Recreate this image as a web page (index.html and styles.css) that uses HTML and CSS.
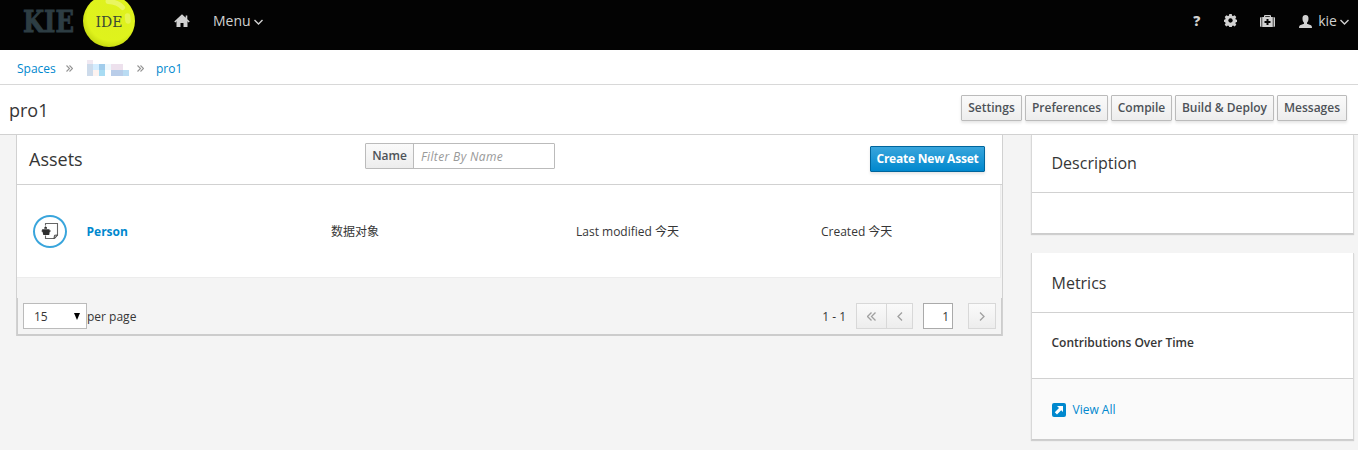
FILE: index.html
```html
<!DOCTYPE html>
<html lang="en">
<head>
<meta charset="utf-8">
<title>KIE IDE</title>
<link rel="stylesheet" href="styles.css">
</head>
<body>
<header class="navbar">
  <svg class="logo" width="140" height="50" viewBox="0 0 140 50">
    <defs><radialGradient id="ball" cx="55%" cy="42%" r="58%"><stop offset="0" stop-color="#def01f"/><stop offset=".8" stop-color="#dff31c"/><stop offset="1" stop-color="#c9dc12"/></radialGradient></defs>
    <text class="logo-kie" x="23" y="31.500" textLength="51" lengthAdjust="spacingAndGlyphs">KIE</text>
    <circle cx="109" cy="21" r="26" fill="url(#ball)"/>
    <path d="M108 1.500 Q118 2 122.500 7.500" stroke="#e9f660" stroke-width="5" stroke-linecap="round" fill="none"/>
    <path d="M127.500 16 L128 21" stroke="#e7f552" stroke-width="5.500" stroke-linecap="round"/>
    <text class="logo-ide" x="95.500" y="26.700" textLength="27" lengthAdjust="spacingAndGlyphs">IDE</text>
  </svg>
  <svg class="home" width="16" height="14" viewBox="0 0 16 14"><path d="M8 1.500L2.500 6.500V13h4V9h3v4h4V6.500z"/><path d="M.8 8L8 1.300 15.200 8M12.500 1.500v4" fill="none" stroke="#d1d1d1" stroke-width="1.600"/></svg>
  <span class="nav-text menu">Menu</span>
  <svg class="caret" width="9" height="6" viewBox="0 0 9 6"><path d="M.5 1l4 4 4-4"/></svg>
  <div class="nav-right">
    <span class="help">?</span>
    <svg class="gear" width="13" height="13" viewBox="0 0 13 13"><path fill-rule="evenodd" d="M5.300 0h2.400l.4 1.700 1 .4 1.500-.9 1.700 1.700-.9 1.500.4 1 1.700.4v2l-1.700.4-.4 1 .9 1.500-1.700 1.700-1.500-.9-1 .4-.4 1.600H5.300l-.4-1.600-1-.4-1.500.9L.7 10.700l.9-1.500-.4-1L0 7.800v-2l1.200-.4.4-1-.9-1.500 1.700-1.700 1.500.9 1-.4zM6.500 4.300a2.200 2.200 0 1 0 .01 0z"/></svg>
    <svg class="medkit" width="15" height="12" viewBox="0 0 15 12"><path fill-rule="evenodd" d="M0 3q0-1 1.500-1v10Q0 12 0 11zM2.200 2H4V1q0-1 1-1h5q1 0 1 1v1h1.800v10H2.200zM5.200 1.200V2h4.600v-.8zM6.500 4v2h-2v2h2v2h2V8h2V6h-2V4zM13.500 2Q15 2 15 3v8q0 1-1.500 1z"/></svg>
    <svg class="user" width="13" height="13" viewBox="0 0 13 13"><path d="M6.500 0C8.700 0 9.700 1.500 9.500 4 9.400 5.800 8.800 7 8 7.800v1l4 1.500q1 .5 1 2.700H0q0-2.200 1-2.700l4-1.500v-1C4.200 7 3.600 5.800 3.500 4 3.300 1.500 4.300 0 6.500 0z"/></svg>
    <span class="nav-text">kie</span>
    <svg class="caret" width="9" height="6" viewBox="0 0 9 6"><path d="M.5 1l4 4 4-4"/></svg>
  </div>
</header>
<nav class="breadcrumb">
  <a class="crumb-spaces">Spaces</a>
  <svg class="sep" width="7" height="7" viewBox="0 0 7 7"><path d="M.5.500l3 3-3 3M3.500.500l3 3-3 3"/></svg>
  <svg class="mosaic" width="42" height="16" viewBox="0 0 42 16" shape-rendering="crispEdges">
    <path fill="#f0e8f1" d="M0 0h6v4H0z"/><path fill="#cddbeb" d="M0 4h6v12H0z"/><path fill="#d4edff" d="M6 4h6v6H6z"/><path fill="#fdf3f0" d="M6 10h6v6H6z"/><path fill="#a1cceb" d="M12 4h6v6h-6z"/><path fill="#a8dcf3" d="M12 10h6v6h-6z"/><path fill="#eef8fd" d="M18 4h6v6h-6z"/><path fill="#ede1ed" d="M24 4h12v6H24z"/><path fill="#b9cde9" d="M24 10h12v6H24z"/><path fill="#badcf3" d="M36 10h6v6h-6z"/>
  </svg>
  <svg class="sep" width="7" height="7" viewBox="0 0 7 7"><path d="M.5.500l3 3-3 3M3.500.500l3 3-3 3"/></svg>
  <a class="crumb-project">pro1</a>
</nav>
<section class="titlebar">
  <h1>pro1</h1>
  <div class="actions">
    <button class="btn settings">Settings</button>
    <button class="btn preferences">Preferences</button>
    <button class="btn compile">Compile</button>
    <button class="btn deploy">Build &amp; Deploy</button>
    <button class="btn messages">Messages</button>
  </div>
</section>
<main class="content">
  <section class="assets">
    <div class="assets-head">
      <h2>Assets</h2>
      <div class="filter"><span class="filter-label">Name</span><span class="filter-input">Filter By Name</span></div>
      <button class="btn primary">Create New Asset</button>
    </div>
    <div class="asset-row">
      <span class="asset-icon">
        <svg width="18" height="18" viewBox="0 0 18 18"><path d="M4.500 3.500V1.500h12V13l-3 3.500h-9V13.500" fill="none" stroke="#666" stroke-width="1.100"/><path d="M13 16.500l.5-3.200 3-.3z" fill="#fff" stroke="#444"/><path d="M3.300 5.500L4.500 4.200 6 5.500v1.300H3.300zM1 7.300h7.600l-.3.900h1.200v1.600h-.8L8.200 13H2.300L1.500 9.800H.7V8.200h.6z" fill="#2f2f2f"/></svg>
      </span>
      <a class="asset-name">Person</a>
      <span>数据对象</span>
      <span>Last modified 今天</span>
      <span>Created 今天</span>
    </div>
    <div class="gap"></div>
    <div class="pager">
      <span class="page-size"><span>15</span><svg width="6" height="7" viewBox="0 0 6 7"><path d="M0 0h6L3 7z"/></svg></span>
      <span>per page</span>
      <span class="range">1 - 1</span>
      <span class="page-btn first"><svg width="9" height="9" viewBox="0 0 9 9"><path d="M4.500.5l-4 4 4 4M8.500.5l-4 4 4 4"/></svg></span>
      <span class="page-btn prev"><svg width="6" height="9" viewBox="0 0 6 9"><path d="M5 .5l-4 4 4 4"/></svg></span>
      <span class="page-no">1</span>
      <span class="page-btn next"><svg width="6" height="9" viewBox="0 0 6 9"><path d="M1 .5l4 4-4 4"/></svg></span>
    </div>
  </section>
  <aside class="side">
    <section class="card description">
      <h3>Description</h3>
      <div class="card-body"></div>
    </section>
    <section class="card">
      <h3>Metrics</h3>
      <div class="card-body metric">Contributions Over Time</div>
      <div class="card-foot">
        <svg width="14" height="14" viewBox="0 0 14 14"><rect width="14" height="14" rx="2" fill="#0088ce"/><path d="M5 3h6v6L9.200 7.200 5 11.400 2.800 9.200 7 5z" fill="#fff"/></svg>
        <a>View All</a>
      </div>
    </section>
  </aside>
</main>
</body>
</html>
```
FILE: styles.css
```css
* { box-sizing: border-box; }
body {
  margin: 0;
  width: 1358px;
  height: 450px;
  overflow: hidden;
  background: #f4f4f4;
  color: #363636;
  font: 12px/20px "Open Sans", "Noto Sans CJK SC", sans-serif;
}
svg { display: block; flex: none; }
h1, h2, h3 { margin: 0; font-weight: 400; }
a { color: #0088ce; }

.navbar { display: flex; align-items: center; height: 50px; background: #030303; padding-bottom: 8px; fill: #d1d1d1; }
.logo { align-self: flex-start; }
.logo-kie { font: bold 29px "DejaVu Serif", serif; fill: #2d3d43; stroke: #2d3d43; stroke-width: .9; }
.logo-ide { font: 15.5px "DejaVu Serif", serif; fill: #3a4a34; }
.home { margin-left: 34px; }
.nav-text { font-size: 14px; color: #d1d1d1; }
.menu { margin-left: 23px; }
.caret { margin: 2px 0 0 3px; fill: none; stroke: #d1d1d1; stroke-width: 1.4; }
.nav-right { display: flex; align-items: center; margin-left: auto; padding-right: 9px; }
.help { font: 800 14px/20px "Open Sans", sans-serif; color: #d1d1d1; }
.gear { margin: -1px 0 0 24px; }
.medkit { margin-left: 23px; }
.user { margin: 0 6px 0 24px; }

.breadcrumb { display: flex; align-items: center; height: 35px; padding: 3px 0 0 17px; background: #fff; border-bottom: 1px solid #d8d8d8; }
.crumb-spaces { width: 49px; }
.sep { fill: none; stroke: #949494; stroke-width: 1.1; }
.mosaic { margin: 0 8px 2px 14px; }
.crumb-project { margin-left: 12px; }

.titlebar { display: flex; height: 50px; padding: 10px 11px 0 9px; background: #fff; border-bottom: 1px solid #d1d1d1; }
h1 { font-size: 18px; line-height: 30px; }
.actions { display: flex; gap: 3px; margin-left: auto; }
.btn {
  height: 26px; padding: 0; border: 1px solid #bbb; border-radius: 1px;
  background: linear-gradient(#fafafa, #ededed); box-shadow: 0 2px 3px rgba(3, 3, 3, .1);
  color: #4d5258; font: 600 12px/22px "Open Sans", sans-serif; text-align: center; white-space: nowrap;
}
.settings { width: 61px; }
.preferences { width: 83px; }
.compile { width: 61px; }
.deploy { width: 99px; }
.messages { width: 70px; }
.primary { width: 115px; height: 26px; margin: 11px 17px 0 auto; background: linear-gradient(#39a5dc, #0088ce); border-color: #00659c; color: #fff; font-weight: 700; letter-spacing: -.22px; }

.content { display: flex; padding-left: 16px; }
.assets { width: 987px; height: 201px; border-right: 1px solid #d1d1d1; border-left: 1px solid #d1d1d1; }
.assets-head { display: flex; height: 50px; background: #fff; border-bottom: 1px solid #d1d1d1; }
h2 { width: 348px; padding-left: 12px; font-size: 18px; line-height: 49px; }
.filter { display: flex; width: 190px; height: 26px; margin-top: 8px; border: 1px solid #bbb; border-radius: 1px; line-height: 24px; }
.filter-label { width: 48px; border-right: 1px solid #bbb; background: linear-gradient(#fafafa, #ededed); color: #4d5258; font-weight: 600; text-align: center; }
.filter-input { padding: 1px 7px 0; color: #999; font-style: italic; letter-spacing: .36px; }
.asset-row {
  display: grid; grid-template-columns: 69.500px 244.500px 245px 245px 1fr; align-items: center;
  width: 984px; height: 93px; padding-top: 2px; background: #fff; border-right: 1px solid #ececec; border-bottom: 1px solid #ececec;
}
.asset-icon { display: flex; align-items: center; justify-content: center; width: 34px; height: 33px; margin: 0 0 2px 16px; border: 2px solid #39a5dc; border-radius: 50%; }
.asset-name { font-weight: 700; }
.gap { height: 20px; }
.pager { display: flex; align-items: flex-start; height: 38px; padding: 5px 5px 0; border: solid #ccc; border-width: 0 1px 2px; line-height: 27px; }
.page-size { display: flex; align-items: center; justify-content: space-between; width: 64px; height: 26px; padding: 0 6px 0 10px; border: 1px solid #bbb; background: #fff; }
.range { margin: 0 10px 0 auto; }
.page-btn { display: flex; align-items: center; justify-content: center; height: 26px; border: 1px solid #d8d8d8; background: linear-gradient(#fafafa, #ededed); fill: none; stroke: #a0a0a0; stroke-width: 1.3; }
.first { width: 31px; }
.prev { width: 27px; margin-left: -1px; }
.page-no { width: 30px; height: 26px; margin: 0 15px 0 10px; padding-right: 3px; border: 1px solid #aaa; background: #fff; line-height: 25px; text-align: right; }
.next { width: 28px; }

.side { width: 323px; margin-left: 28px; }
.card { border: 1px solid #d8d8d8; border-top: 0; border-bottom-color: #ccc; background: #fff; box-shadow: 0 1px 1px rgba(3, 3, 3, .15); }
.description { margin-bottom: 19px; }
h3 { height: 60px; padding: 0 19.500px; border-bottom: 1px solid #d1d1d1; font-size: 16px; line-height: 60px; }
.description h3 { height: 58px; line-height: 56px; }
.card-body { height: 40px; }
.metric { height: 66px; padding: 20px 19.500px; border-bottom: 1px solid #d1d1d1; font-weight: 600; }
.card-foot { display: flex; align-items: center; gap: 7px; height: 60px; padding: 1px 19.500px 0; background: #fafafa; }
```
